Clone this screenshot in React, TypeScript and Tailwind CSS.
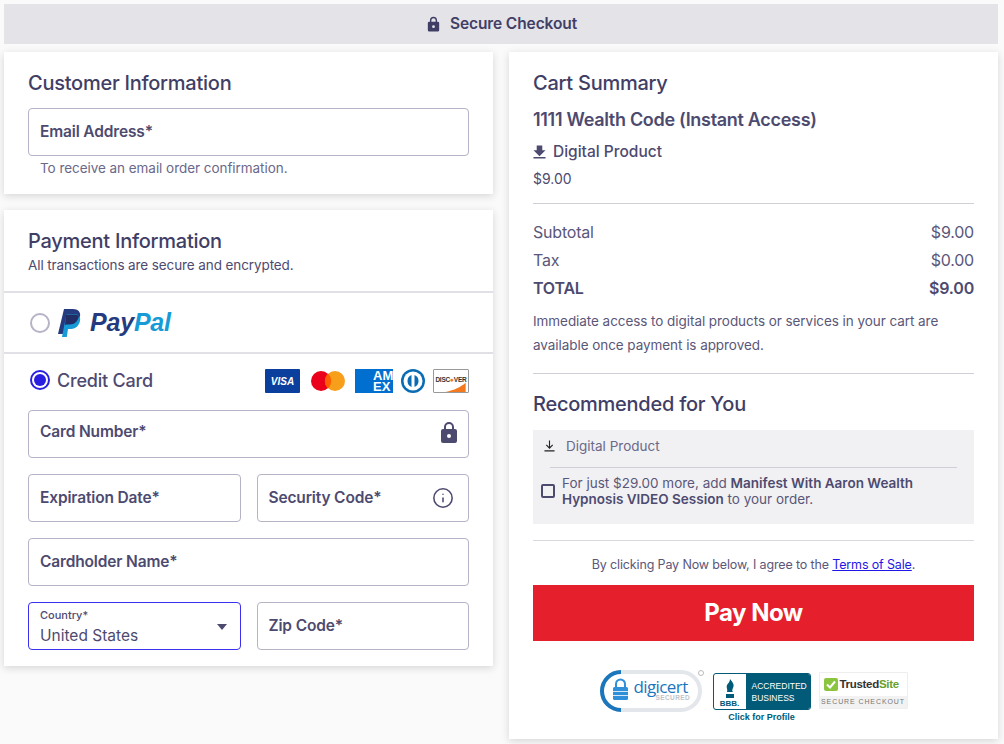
import { Info } from "lucide-react";

const ink = "text-[#4d4a70]";

function Field({ label, icon, high }: { label: string; icon?: React.ReactNode; high?: boolean }) {
  return (
    <div className="flex h-12 flex-1 items-center justify-between rounded border border-[#b5b3c6] bg-white px-[11px]">
      <span className={`text-[15.5px] font-semibold tracking-[-0.15px] ${ink} ${high ? "-mt-[5px]" : ""}`}>{label}</span>
      {icon}
    </div>
  );
}

function SolidLock({ className }: { className?: string }) {
  return (
    <svg viewBox="0 0 24 24" className={className} fill="currentColor">
      <path d="M18 8h-1V6a5 5 0 0 0-10 0v2H6a2 2 0 0 0-2 2v10a2 2 0 0 0 2 2h12a2 2 0 0 0 2-2V10a2 2 0 0 0-2-2zM9 6a3 3 0 0 1 6 0v2H9V6zm3 11a2 2 0 1 1 0-4 2 2 0 0 1 0 4z" />
    </svg>
  );
}

function DownloadIcon({ className }: { className?: string }) {
  return (
    <svg viewBox="0 0 14 14" className={className} fill="currentColor">
      <path d="M4 0h6v5h3.500L7 11.500.5 5H4zM.5 12.500h13V14H.5z" />
    </svg>
  );
}

function DownloadOutline({ className }: { className?: string }) {
  return (
    <svg viewBox="0 0 12 12" className={className} fill="none" stroke="currentColor" strokeWidth="1.200">
      <path d="M6 0v8M2.500 4.800 6 8.300l3.500-3.500M.5 11.300h11" />
    </svg>
  );
}

function PayPalLogo() {
  return (
    <div className="flex items-center">
      <svg viewBox="0 0 24 28" className="h-[28px] w-[24px]">
        <path fill="#253b80" d="M7 0h9c5 0 8 3 7 7.500C22 13 18 16 13 16H9l-1.500 9H1L7 0z" />
        <path fill="#179bd7" d="M9.500 5h7.500c4 0 7 2 6 7-1 5-5 8-9 8h-3l-1.200 8H5L9.500 5z" />
        <path fill="#222d65" d="M9 5.500h8c2 0 4 .5 5 1.500-1 5-4.500 8.500-9 8.500H9.500L8 16l1-10.500z" />
      </svg>
      <span className="ml-[9px] font-['Liberation_Sans',sans-serif] text-[25px] font-bold italic leading-none tracking-[-0.2px]">
        <span className="text-[#253b80]">Pay</span>
        <span className="text-[#179bd7]">Pal</span>
      </span>
    </div>
  );
}

function CardLogos() {
  return (
    <div className="mt-[2px] flex items-center">
      <div className="flex h-6 w-[35px] items-center justify-center rounded-[1px] bg-[#0a3f9e] font-['Liberation_Sans',sans-serif] text-[10px] font-bold italic text-white">
        VISA
      </div>
      <svg viewBox="0 0 34 20" className="ml-[11px] h-5 w-[34px]">
        <circle cx="10" cy="10" r="10" fill="#eb001b" />
        <circle cx="24" cy="10" r="10" fill="#f79e1b" />
        <path d="M17 2.700a10 10 0 0 1 0 14.600 10 10 0 0 1 0-14.600z" fill="#ff5f00" />
      </svg>
      <div className="ml-[10px] flex h-6 w-[38px] flex-col items-start justify-center overflow-hidden bg-[#016fd0] pl-[18px] font-['Liberation_Sans',sans-serif] text-[13px] font-bold leading-[11px] text-white">
        <span>AM</span>
        <span>EX</span>
      </div>
      <svg viewBox="0 0 24 24" className="ml-[8px] h-6 w-6">
        <circle cx="12" cy="12" r="12" fill="#0a6cb3" />
        <circle cx="12" cy="12" r="9.500" fill="#fff" />
        <path d="M10.500 6a6.500 6.500 0 0 0 0 12zM13.500 6a6.500 6.500 0 0 1 0 12z" fill="#0a6cb3" />
      </svg>
      <div className="relative ml-[8px] flex h-6 w-9 items-start justify-center overflow-hidden rounded-[1px] border border-[#999] bg-white pt-[6px] font-['Liberation_Sans',sans-serif] text-[6.500px] font-bold leading-[8px] tracking-[-0.2px] text-[#333]">
        <span className="relative z-10 whitespace-nowrap">DISC<span className="text-[#f47a20]">●</span>VER</span>
        <svg viewBox="0 0 36 24" className="absolute inset-0 h-full w-full">
          <path d="M34 14v10H12c10-2 16-5 22-10z" fill="#f47a20" />
        </svg>
      </div>
    </div>
  );
}

function Badges() {
  return (
    <div className="flex items-start justify-center">
      <div className="relative h-[44px] w-[104px]">
        <svg viewBox="0 0 104 44" className="absolute inset-0 h-full w-full">
          <rect x="2" y="2" width="98" height="38" rx="19" fill="#fff" stroke="#e3e6ea" strokeWidth="4" />
          <path d="M21 2A19 19 0 0 0 21 40" fill="none" stroke="#1b76bc" strokeWidth="4" />
          <rect x="13" y="17" width="15" height="13" rx="1.500" fill="#2f8fd8" />
          <path d="M16 17v-3a4.500 4.500 0 0 1 9 0v3" fill="none" stroke="#2f8fd8" strokeWidth="2" />
          <path d="M13 21.500h15M13 25.500h15" stroke="#fff" strokeWidth="0.800" />
          <circle cx="101" cy="3" r="2.500" fill="none" stroke="#bbb" />
        </svg>
        <span className="absolute left-[34px] top-[9px] font-['Open_Sans',sans-serif] text-[17px] leading-[15px] tracking-[-0.6px] text-[#1b76bc]">digicert</span>
        <span className="absolute left-[56px] top-[24px] font-['Liberation_Sans',sans-serif] text-[6.500px] font-bold leading-[8px] tracking-[0.4px] text-[#bfc4c9]">SECURED</span>
      </div>
      <div className="ml-[9px] mt-[3px] flex flex-col items-center">
        <div className="flex h-[37px] w-[98px] overflow-hidden rounded-[3px] border border-[#005a78] bg-white">
          <div className="flex w-[32px] flex-col items-center justify-end font-['Liberation_Sans',sans-serif] text-[8px] font-bold leading-[10px] text-[#005a78]">
            <svg viewBox="0 0 12 20" className="h-[20px] w-[12px]">
              <path d="M6 0c2 3 5 5 3 9-1 2-1 3 0 4H3c1-3-1-4 0-7 1-2 3-3 3-6zM2 15h8v4H2z" fill="#005a78" />
            </svg>
            BBB.
          </div>
          <div className="flex flex-1 flex-col justify-center bg-[#005a78] pl-[6px] font-['Liberation_Sans',sans-serif] text-[8.500px] leading-[12px] text-white">
            <span>ACCREDITED</span>
            <span>BUSINESS</span>
          </div>
        </div>
        <span className="mt-[2px] font-['Liberation_Sans',sans-serif] text-[9px] font-bold leading-[11px] text-[#005a78]">Click for Profile</span>
      </div>
      <div className="ml-[8px] mt-[2px] flex h-[37px] w-[89px] flex-col rounded-[1px] border border-[#eeeeee] bg-white">
        <div className="flex h-[23px] items-center pl-[4px]">
          <span className="flex h-[13px] w-[14px] items-center justify-center rounded-[2px] bg-[#8bc53f]">
            <svg viewBox="0 0 14 13" className="h-[13px] w-[14px]">
              <path d="M3 6.500l3 3 5-6" fill="none" stroke="#fff" strokeWidth="2" />
            </svg>
          </span>
          <span className="ml-[2px] font-['Liberation_Sans',sans-serif] text-[11.500px] font-bold tracking-[-0.3px] text-[#333]">
            Trusted<span className="text-[#6b9f2c]">Site</span>
          </span>
        </div>
        <div className="flex flex-1 items-center justify-center bg-[#f2f2f2] font-['Liberation_Sans',sans-serif] text-[7px] tracking-[0.9px] text-[#777]">
          SECURE CHECKOUT
        </div>
      </div>
    </div>
  );
}

export default function App() {
  return (
    <div className={`h-[744px] overflow-hidden bg-[#fafafa] px-1 pt-1 font-['Inter',sans-serif] ${ink}`}>
      <div className="flex h-10 w-[994px] items-center justify-center bg-[#e3e3e8] text-[15.5px] font-semibold tracking-[-0.1px] text-[#413e66]">
        <SolidLock className="mr-2 h-[17px] w-[17px]" />
        Secure Checkout
      </div>

      <div className="mt-2 flex items-start gap-4">
        {/* left column */}
        <div className="flex w-[489px] flex-col gap-4">
          <section className="h-[142px] bg-white px-6 pt-[18px] shadow-[0_2px_8px_rgba(0,0,0,0.15)]">
            <h2 className="text-[20px] font-medium leading-[26px] tracking-[-0.25px] text-[#413e66]">Customer Information</h2>
            <div className="mt-[12px] flex">
              <Field label="Email Address*" />
            </div>
            <p className="mt-[2px] pl-3 text-[13.5px] leading-5 tracking-[-0.05px] text-[#6b6889]">To receive an email order confirmation.</p>
          </section>

          <section className="h-[456px] bg-white shadow-[0_2px_8px_rgba(0,0,0,0.15)]">
            <div className="h-[83px] border-b-2 border-[#e0e0e6] px-6 pt-[18px]">
              <h2 className="text-[20px] font-medium leading-[26px] tracking-[-0.25px] text-[#413e66]">Payment Information</h2>
              <p className="mt-[1px] text-[13.500px] leading-[20px] tracking-[-0.1px]">All transactions are secure and encrypted.</p>
            </div>
            <div className="flex h-[61px] items-center border-b-2 border-[#e0e0e6] pl-[26px]">
              <span className="mr-[7px] h-5 w-5 rounded-full border-2 border-[#b5b3c6] bg-white" />
              <PayPalLogo />
            </div>
            <div className="px-6 pt-[14px]">
              <div className="flex h-6 items-center justify-between">
                <div className="flex items-center">
                  <span className="ml-[2px] flex h-5 w-5 items-center justify-center rounded-full border-2 border-[#2a1fe0]">
                    <span className="h-3 w-3 rounded-full bg-[#2a1fe0]" />
                  </span>
                  <span className="ml-[7px] text-[18px] font-medium tracking-[-0.2px]">Credit Card</span>
                </div>
                <CardLogos />
              </div>
              <div className="mt-[18px] flex flex-col gap-4">
                <div className="flex">
                  <Field label="Card Number*" high icon={<SolidLock className="-mr-[4px] -mt-[3px] h-[24px] w-[24px] text-[#4d4a70]" />} />
                </div>
                <div className="flex gap-4">
                  <Field label="Expiration Date*" />
                  <Field label="Security Code*" icon={<Info className="mr-[3px] h-[22px] w-[22px] text-[#4d4a70]" strokeWidth={1.700} />} />
                </div>
                <div className="flex">
                  <Field label="Cardholder Name*" />
                </div>
                <div className="flex gap-4">
                  <div className="relative flex h-12 flex-1 flex-col rounded border border-[#3b2ff0] bg-white px-[11px] pt-[5px]">
                    <span className="text-[11px] font-medium leading-[14px]">Country*</span>
                    <span className="mt-[3px] text-[15.5px] leading-[22px]">United States</span>
                    <span className="absolute right-[13px] top-[21px] h-0 w-0 border-x-[5px] border-t-[6px] border-x-transparent border-t-[#4d4a70]" />
                  </div>
                  <Field label="Zip Code*" />
                </div>
              </div>
            </div>
          </section>
        </div>

        {/* right column */}
        <section className="h-[687px] w-[489px] bg-white px-6 pt-[18px] shadow-[0_2px_8px_rgba(0,0,0,0.15)]">
          <h2 className="text-[20px] font-medium leading-[26px] tracking-[-0.25px] text-[#413e66]">Cart Summary</h2>
          <h3 className="mt-[12px] text-[18px] font-semibold leading-6 tracking-[-0.3px]">1111 Wealth Code (Instant Access)</h3>
          <div className="mt-[8px] flex h-6 items-center text-[15.5px] font-medium">
            <DownloadIcon className="mr-[7px] h-[14px] w-[13px]" />
            Digital Product
          </div>
          <p className="mt-[4px] h-[21px] text-[14px] leading-[21px]">$9.00</p>
          <div className="mt-[14px] border-t border-[#cfcfd8]" />
          <div className="mt-[14px] flex h-7 items-center justify-between text-[16px] tracking-[-0.2px] text-[#5a5779]">
            <span>Subtotal</span>
            <span>$9.00</span>
          </div>
          <div className="flex h-7 items-center justify-between text-[16px] tracking-[-0.2px] text-[#5a5779]">
            <span>Tax</span>
            <span>$0.00</span>
          </div>
          <div className="flex h-7 items-center justify-between text-[16px] font-semibold tracking-[-0.2px]">
            <span>TOTAL</span>
            <span>$9.00</span>
          </div>
          <p className="mt-[7px] text-[13.500px] leading-6 tracking-[-0.06px] text-[#5a5779]">
            Immediate access to digital products or services in your cart are
            <br />
            available once payment is approved.
          </p>
          <div className="mt-[16px] border-t border-[#cfcfd8]" />
          <h2 className="mt-[17px] text-[20px] font-medium leading-[26px] tracking-[-0.25px] text-[#413e66]">Recommended for You</h2>
          <div className="mt-[13px] h-[94px] bg-[#f1f1f3] px-[8px]">
            <div className="mb-[5px] flex h-[32px] items-center pl-[3px] text-[13.500px] text-[#6b6889]">
              <DownloadOutline className="mr-[11px] h-[12px] w-[11px] text-[#222]" />
              Digital Product
            </div>
            <div className="mx-[9px] border-t border-[#cfcfd8]" />
            <div className="mt-[7px] flex items-center">
              <span className="h-[14px] w-[14px] shrink-0 rounded-[2px] border-2 border-[#4d4a70]" />
              <p className="ml-[7px] text-[13.500px] leading-4 text-[#5a5779]">
                For just $29.00 more, add <b className="font-semibold text-[#4d4a70]">Manifest With Aaron Wealth Hypnosis VIDEO Session</b> to your order.
              </p>
            </div>
          </div>
          <div className="mt-4 border-t border-[#d8d8de]" />
          <p className="mt-[15px] text-center text-[12.500px] leading-[18px] tracking-[-0.14px] text-[#5a5779]">
            By clicking Pay Now below, I agree to the <a href="#" className="text-[#1f16e8] underline">Terms of Sale</a>.
          </p>
          <button className="mt-[11px] flex h-14 w-full items-center justify-center bg-[#e61f2d] text-[24px] font-bold tracking-[-0.5px] text-white">
            Pay Now
          </button>
          <div className="mt-[29px]">
            <Badges />
          </div>
        </section>
      </div>
    </div>
  );
}
